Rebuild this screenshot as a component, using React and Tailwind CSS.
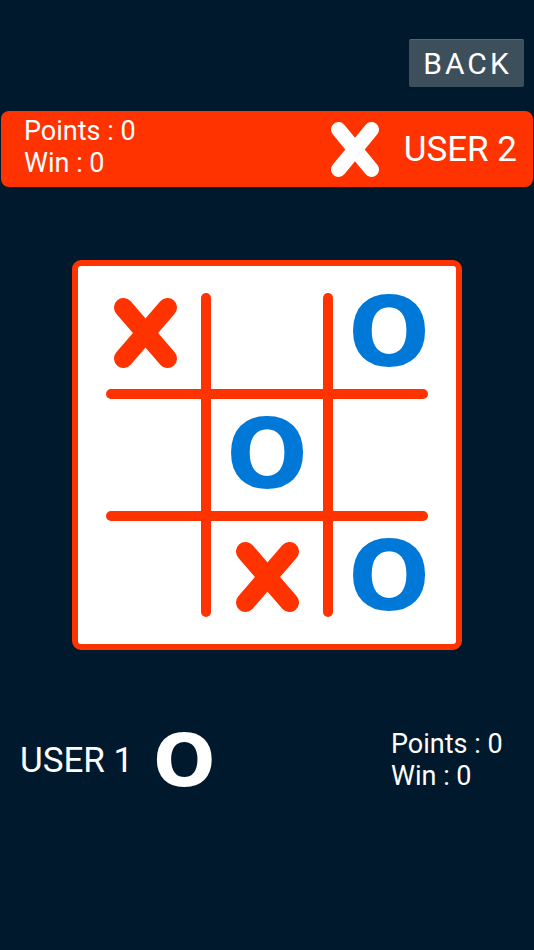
import React from "react"

const board = ["X", "", "O", "", "O", "", "", "X", "O"]

// rounded-stroke cross, like the drawable in the app
const Cross = ({ w, h, sw, color }) => (
  <svg width={w} height={h} viewBox={`0 0 ${w} ${h}`}>
    <g stroke={color} strokeWidth={sw} strokeLinecap="round">
      <line x1={sw / 2} y1={sw / 2} x2={w - sw / 2} y2={h - sw / 2} />
      <line x1={w - sw / 2} y1={sw / 2} x2={sw / 2} y2={h - sw / 2} />
    </g>
  </svg>
)

const Cell = ({ value }) => (
  <div className="w-[122px] h-[122px] flex items-center justify-center">
    {value === "X" && <Cross w={63} h={70} sw={19} color="#ff3300" />}
    {value === "O" && (
      <span className="font-['DejaVu_Sans',sans-serif] font-bold text-[96px] leading-none text-[#0078d7]">
        O
      </span>
    )}
  </div>
)

const App = () => {
  return (
    <div className="w-[534px] h-[950px] bg-[#01192c] flex flex-col font-['Roboto',sans-serif] text-white overflow-hidden">
      {/* Back button */}
      <div className="flex justify-end pr-[10px] pt-[39px]">
        <button className="w-[115px] h-[48px] bg-[#3d4f5b] border-t border-[#56666f] rounded-[2px] text-[30px] leading-none tracking-[3px] text-white flex items-center justify-center pl-[2px]">
          BACK
        </button>
      </div>

      {/* User 2 bar */}
      <div className="mt-[24px] mx-[1px] h-[76px] bg-[#ff3300] rounded-[8px] flex items-center justify-between pl-[23px] pr-[16px]">
        <div className="self-start pt-[4px] text-[27px] leading-[32px]">
          <div>Points : 0</div>
          <div>Win : 0</div>
        </div>
        <div className="flex items-center gap-[25px]">
          <Cross w={48} h={55} sw={15} color="#ffffff" />
          <span className="text-[35px] leading-none">USER 2</span>
        </div>
      </div>

      {/* Board */}
      <div className="mt-[73px] mx-auto w-[390px] h-[390px] border-[6px] border-[#ff3300] rounded-[9px] bg-white p-[6px]">
        <div className="relative grid grid-cols-3">
          {board.map((v, i) => (
            <Cell key={i} value={v} />
          ))}
          <svg className="absolute inset-0 pointer-events-none" width="366" height="366" viewBox="0 0 366 366">
            <g stroke="#ff3300" strokeWidth="10" strokeLinecap="round">
              <line x1="122" y1="26" x2="122" y2="340" />
              <line x1="244" y1="26" x2="244" y2="340" />
              <line x1="27" y1="122" x2="339" y2="122" />
              <line x1="27" y1="244" x2="339" y2="244" />
            </g>
          </svg>
        </div>
      </div>

      {/* User 1 row */}
      <div className="mt-[70px] h-[80px] flex items-center">
        <div className="flex-1 flex items-center pl-[20px] gap-[20px]">
          <span className="text-[35px] leading-none">USER 1</span>
          <span className="font-['DejaVu_Sans',sans-serif] font-bold text-[73px] leading-none">O</span>
        </div>
        <div className="w-[143px] text-[27px] leading-[32px]">
          <div>Points : 0</div>
          <div>Win : 0</div>
        </div>
      </div>
    </div>
  )
}

export default App
